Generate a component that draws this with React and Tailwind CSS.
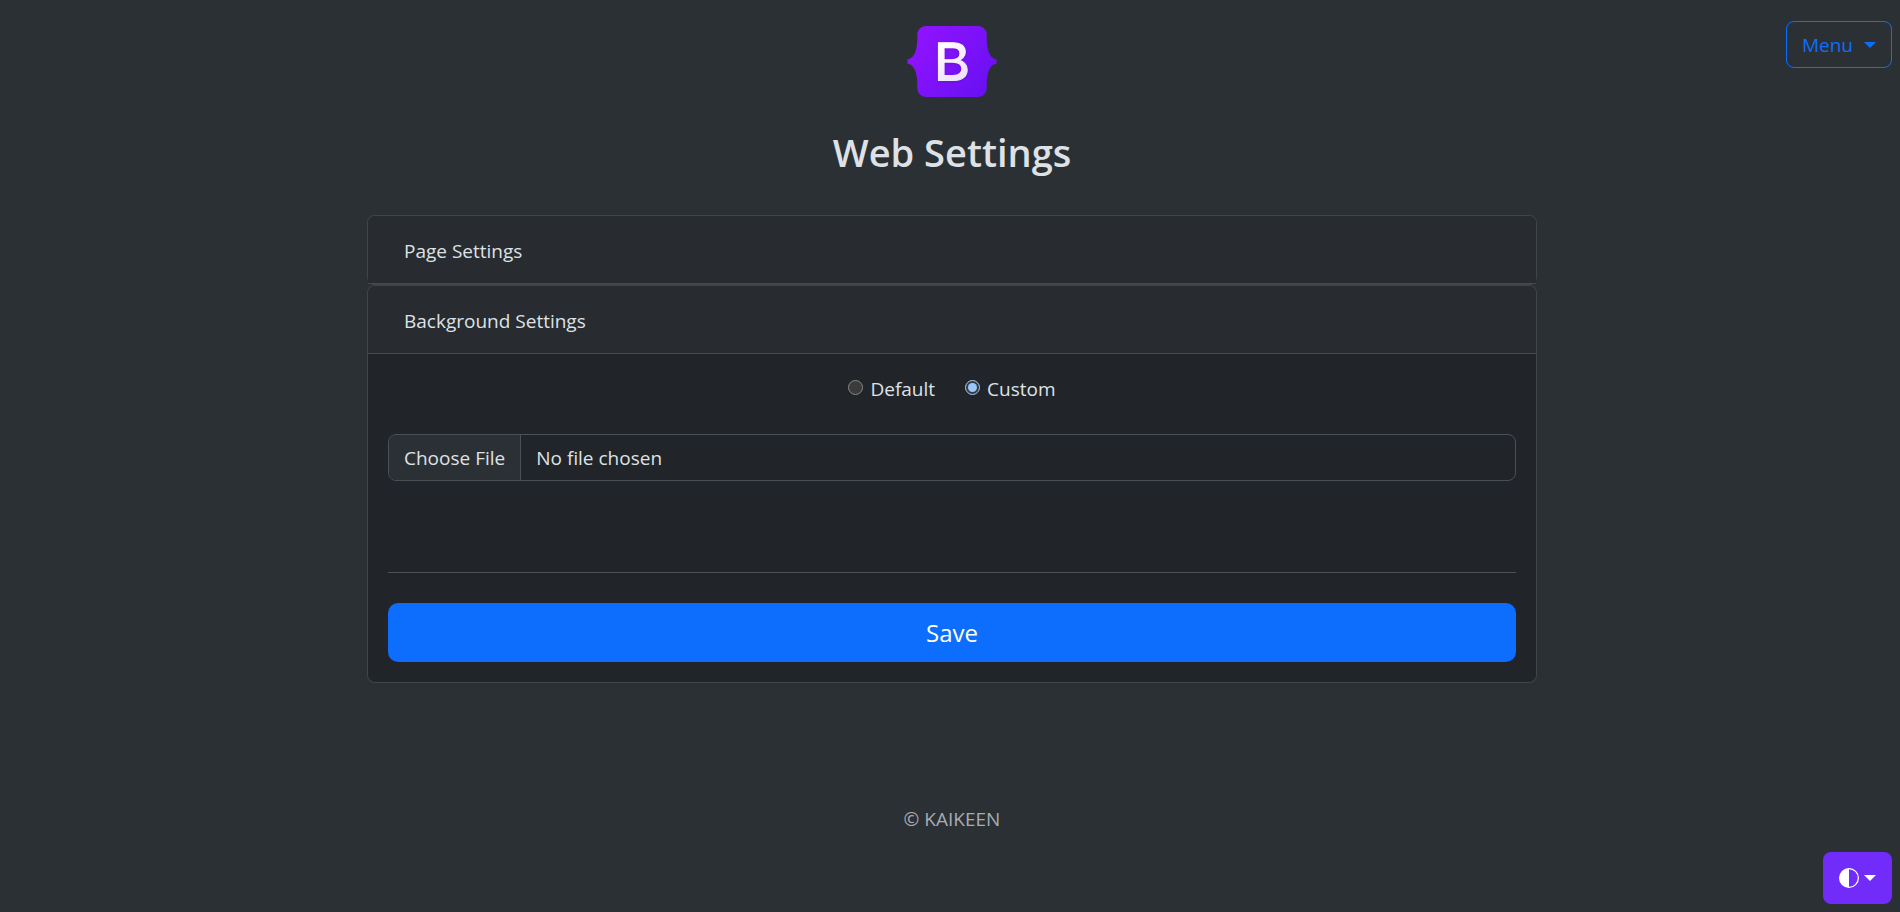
import React from "react";

function Caret() {
  return <span aria-hidden="true" className="inline-block border-x-6 border-t-6 border-x-transparent border-t-current" />;
}

function Logo() {
  return (
    <svg className="h-[71px] w-[90px]" viewBox="0 0 512 408" role="img" aria-label="Bootstrap">
      <defs>
        <linearGradient id="shell" x1="76" y1="11" x2="523" y2="366" gradientUnits="userSpaceOnUse">
          <stop stopColor="#9013fe" />
          <stop offset="1" stopColor="#6610f2" />
        </linearGradient>
        <linearGradient id="letter" x1="194" y1="95" x2="293" y2="263" gradientUnits="userSpaceOnUse">
          <stop stopColor="#ffffff" />
          <stop offset="1" stopColor="#f1e5fc" />
        </linearGradient>
        <filter id="shade" x="-20%" y="-20%" width="140%" height="140%">
          <feDropShadow dx="0" dy="4" stdDeviation="8" floodOpacity="0.15" />
        </filter>
      </defs>
      <path
        fill="url(#shell)"
        d="M56.5 53.3C55.5 25.5 77.2 0 106.3 0h299.5c29 0 50.7 25.5 49.7 53.3-.9 26.7.3 61.2 9 89.4 8.7 28.2 23.4 46.1 47.5 48.4v26c-24.1 2.3-38.8 20.2-47.5 48.4-8.7 28.2-9.9 62.700-9 89.400 1 27.800-20.700 53.300-49.700 53.300H106.300c-29.100 0-50.800-25.500-49.800-53.300.9-26.700-.3-61.200-9-89.400C38.800 237.300 24.100 219.400 0 217.100v-26c24.100-2.300 38.800-20.200 47.500-48.400 8.700-28.200 9.900-62.700 9-89.400z"
      />
      <path
        fill="url(#letter)"
        stroke="url(#letter)"
        strokeWidth="7"
        filter="url(#shade)"
        d="M267.1 312.5c47.3 0 75.8-23.2 75.8-61.3 0-28.9-20.3-49.8-50.5-53.1v-1.2c22.2-3.6 39.6-24.2 39.6-46.9 0-32.5-25.6-53.6-64.9-53.6h-88.4v216.100h88.400zm-57.200-188.200h50c27.100 0 42.400 12.100 42.400 34 0 23.400-17.900 36.300-50.300 36.300h-42.100v-70.300zm0 160.500v-77.500h49.700c35.500 0 53.500 13 53.500 38.600 0 25.500-17.500 38.900-50.500 38.900h-52.700z"
      />
    </svg>
  );
}

function HalfCircle() {
  return (
    <svg className="size-5" viewBox="0 0 16 16" fill="currentColor" aria-hidden="true">
      <path d="M8 15A7 7 0 1 0 8 1zm0 1A8 8 0 1 1 8 0a8 8 0 0 1 0 16" />
    </svg>
  );
}

function Header({ children }) {
  return (
    <h2 className="h-[68px] rounded-t-[7px] border-b border-white/15 bg-[#282b2f] px-9 py-5">
      {children}
    </h2>
  );
}

function Radio({ label, ...props }) {
  return (
    <label className="flex items-center gap-[7px]">
      <input type="radio" name="background" className="mb-1 size-[15px]" {...props} />
      {label}
    </label>
  );
}

export default function App() {
  return (
    <div className="relative min-h-screen bg-[#2b3035] pl-1 font-['Open_Sans',sans-serif] text-[19px] leading-[30px] text-[#dee2e6] [color-scheme:dark]">
      <button type="button" className="absolute top-[21px] right-2 flex h-[47px] items-center gap-[11px] rounded-lg border border-[#0d6efd] px-[15px] text-[#0d6efd]">
        Menu <Caret />
      </button>

      <div className="mx-auto flex max-w-[1170px] flex-col">
        <header className="flex flex-col items-center pt-[26px]">
          <Logo />
          <h1 className="mt-[31px] text-[38px] leading-12 font-semibold">Web Settings</h1>
        </header>

        <main className="mt-[39px]">
          <section className="rounded-lg border border-white/15 bg-[#212529]">
            <Header>Page Settings</Header>
          </section>
          <section className="rounded-lg border border-white/15 bg-[#212529]">
            <Header>Background Settings</Header>
            <form className="p-5" onSubmit={(e) => e.preventDefault()}>
              <div className="flex justify-center gap-[30px]">
                <Radio label="Default" value="default" />
                <Radio label="Custom" value="custom" defaultChecked />
              </div>
              <input
                type="file"
                aria-label="Background image"
                className="mt-[30px] block h-[47px] w-full overflow-hidden rounded-lg border border-[#495057] file:mr-[15px] file:h-[45px] file:border-r file:border-[#495057] file:bg-[#2b3035] file:px-[15px] file:text-[#dee2e6]"
              />
              <hr className="mt-[91px] border-[#4d5154]" />
              <button type="submit" className="mt-[30px] h-[59px] w-full rounded-[10px] bg-[#0d6efd] text-2xl text-white">
                Save
              </button>
            </form>
          </section>
        </main>

        <footer className="mt-[121px] text-center text-[#a7acb1]">© KAIKEEN</footer>
      </div>

      <button type="button" aria-label="Toggle theme" className="absolute right-2 bottom-2 flex h-[52px] items-center gap-[5px] rounded-lg bg-[#712cf9] px-4 text-white">
        <HalfCircle />
        <Caret />
      </button>
    </div>
  );
}
